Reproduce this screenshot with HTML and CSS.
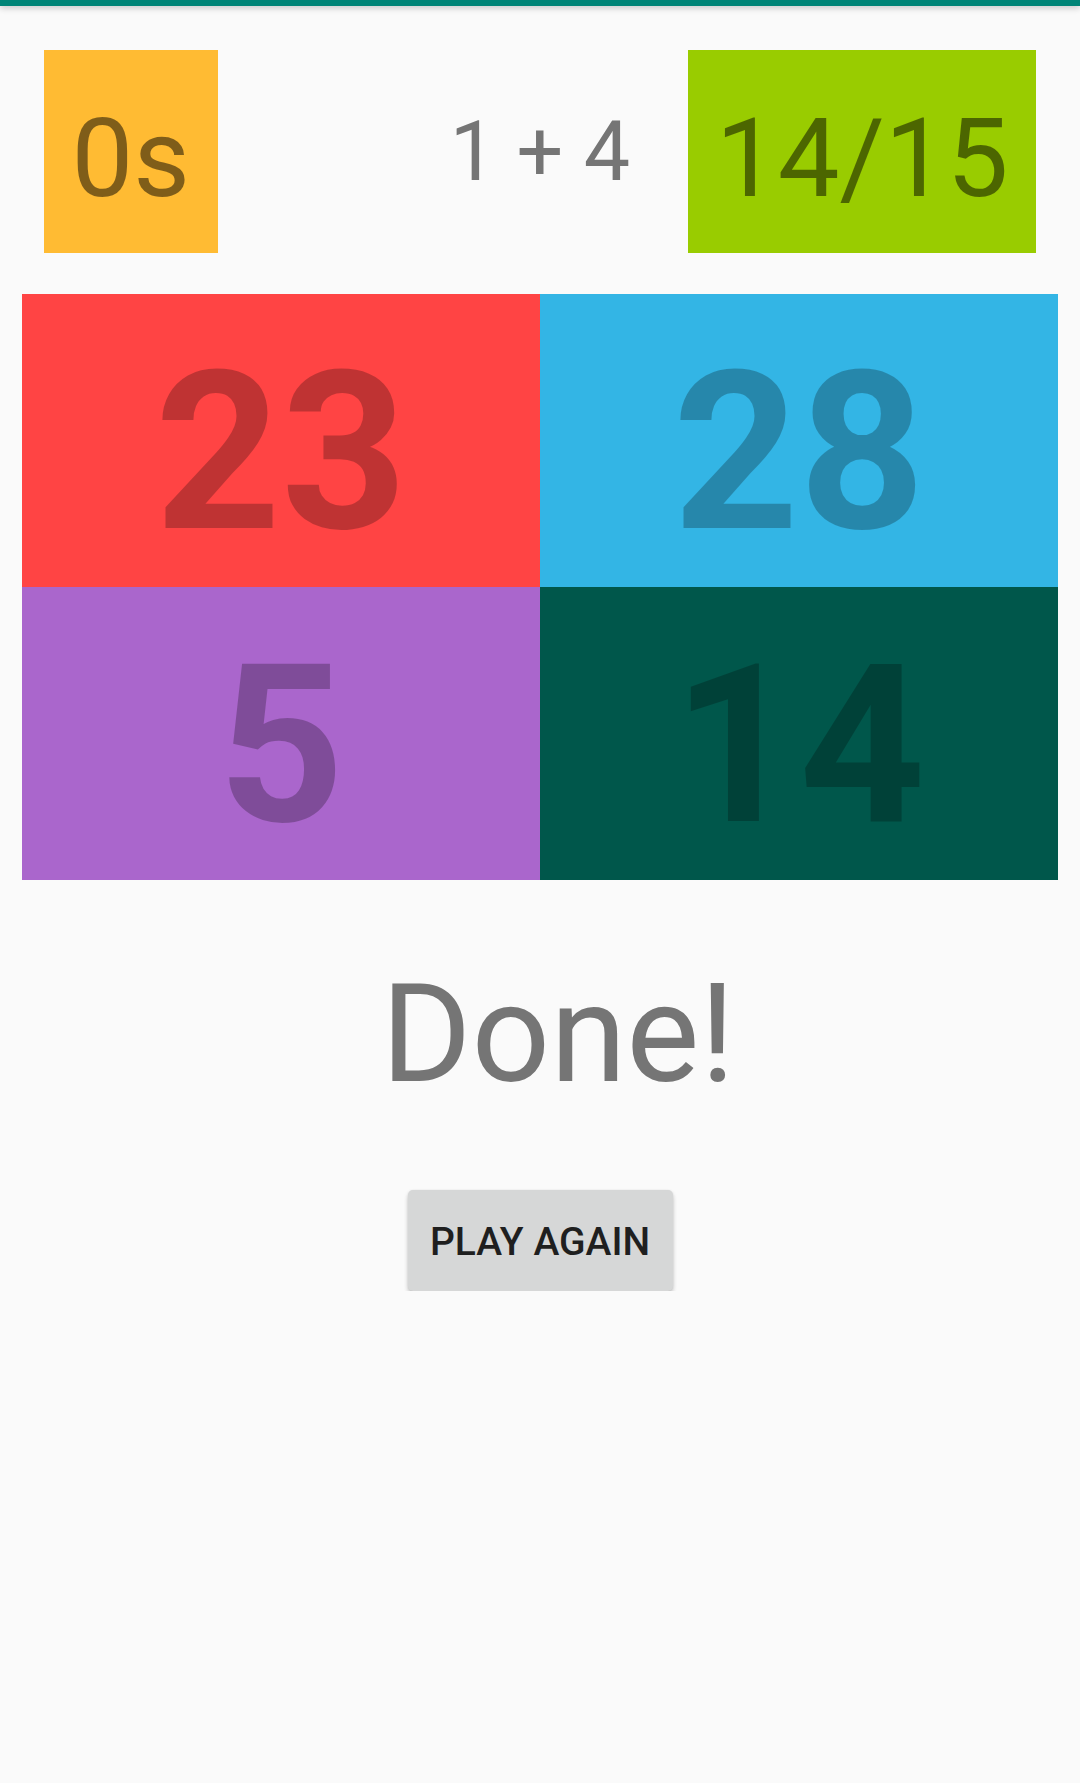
FILE: index.html
```html
<!DOCTYPE html>
<html lang="en">
<head>
<meta charset="utf-8">
<title>Brain Trainer</title>
<link rel="stylesheet" href="styles.css">
</head>
<body>
<div class="appbar"></div>
<main class="screen">
  <header class="header">
    <div class="timer">0s</div>
    <div class="sum">1 + 4</div>
    <div class="score">14/15</div>
  </header>
  <section class="grid">
    <div class="cell red">23</div>
    <div class="cell blue">28</div>
    <div class="cell purple">5</div>
    <div class="cell teal">14</div>
  </section>
  <p class="result">Done!</p>
  <div class="actions">
    <button class="play-btn" type="button">PLAY AGAIN</button>
  </div>
</main>
</body>
</html>
```

FILE: styles.css
```css
html, body {
  margin: 0;
  padding: 0;
  background: #fafafa;
  font-family: Roboto, "Liberation Sans", sans-serif;
}

.appbar {
  height: 6px;
  background: #008577;
  box-shadow: 0 2px 6px rgba(0, 0, 0, 0.22);
  position: relative;
  z-index: 1;
}

.screen {
  display: flex;
  flex-direction: column;
}

.header {
  margin-top: 44px;
  padding: 0 44px;
  display: grid;
  grid-template-columns: 1fr auto 1fr;
  align-items: center;
  height: 203px;
}

.timer,
.score {
  font-size: 110px;
  line-height: 146px;
  padding: 36px 27.5px 21px;
  height: 203px;
  box-sizing: border-box;
  color: rgba(0, 0, 0, 0.5);
  white-space: nowrap;
}

.timer {
  background: #ffbb33;
  justify-self: start;
}

.score {
  background: #99cc00;
  justify-self: end;
}

.sum {
  font-size: 82.5px;
  color: #757575;
  white-space: nowrap;
}

.grid {
  margin: 41px 22px 0;
  display: grid;
  grid-template-columns: 1fr 1fr;
  grid-template-rows: 293px 293px;
}

.cell {
  display: flex;
  align-items: center;
  justify-content: center;
  padding-top: 24px;
  box-sizing: border-box;
  font-size: 220px;
  font-weight: 700;
  color: rgba(0, 0, 0, 0.25);
}

.red { background: #ff4444; }
.blue { background: #33b5e5; }
.purple { background: #aa66cc; }
.teal { background: #00574b; }

.result {
  margin: 73px 0 0;
  padding-left: 36px;
  text-align: center;
  font-size: 138px;
  color: #757575;
}

.actions {
  margin-top: 75px;
  display: flex;
  justify-content: center;
}

.play-btn {
  width: 265px;
  height: 101px;
  border: none;
  border-radius: 5px;
  background: #d6d7d7;
  box-shadow: 0 3px 4px rgba(0, 0, 0, 0.22), 0 0 2px rgba(0, 0, 0, 0.08);
  font-family: Roboto, "Liberation Sans", sans-serif;
  font-weight: 500;
  font-size: 39px;
  color: #1f1f1f;
  padding: 2px 0 0;
}
```
